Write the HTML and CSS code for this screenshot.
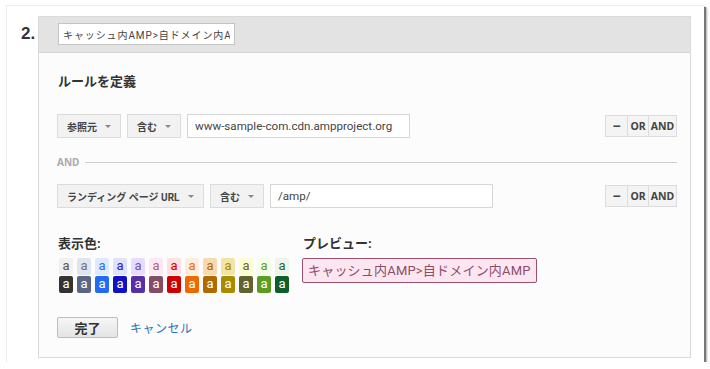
FILE: index.html
```html
<!DOCTYPE html>
<html lang="ja">
<head>
    <meta charset="UTF-8">
    <title>ルールを定義</title>
    <link rel="stylesheet" href="styles.css">
</head>
<body>
    <div class="card">
        <div class="step-num">2.</div>
        <div class="panel">
            <div class="panel-header">
                <input type="text" class="name-input" value="キャッシュ内AMP>自ドメイン内AMP">
            </div>
            <div class="panel-body">
                <h3 class="section-title">ルールを定義</h3>

                <div class="rule-row">
                    <div class="select sel-dim">参照元 <span class="caret"></span></div>
                    <div class="select sel-op">含む <span class="caret"></span></div>
                    <input type="text" class="value-input" value="www-sample-com.cdn.ampproject.org">
                    <div class="logic">
                        <button class="lbtn minus">&minus;</button><button class="lbtn or">OR</button><button class="lbtn and">AND</button>
                    </div>
                </div>

                <div class="and-sep"><span>AND</span><div class="sep-line"></div></div>

                <div class="rule-row">
                    <div class="select sel-dim2">ランディング ページ URL <span class="caret"></span></div>
                    <div class="select sel-op">含む <span class="caret"></span></div>
                    <input type="text" class="value-input" value="/amp/">
                    <div class="logic">
                        <button class="lbtn minus">&minus;</button><button class="lbtn or">OR</button><button class="lbtn and">AND</button>
                    </div>
                </div>

                <div class="color-row">
                    <div class="color-col">
                        <div class="label">表示色:</div>
                        <div class="swatches">
                            <div class="sw"><span class="lt c1l">a</span><span class="dk c1d">a</span></div>
                            <div class="sw"><span class="lt c2l">a</span><span class="dk c2d">a</span></div>
                            <div class="sw"><span class="lt c3l">a</span><span class="dk c3d">a</span></div>
                            <div class="sw"><span class="lt c4l">a</span><span class="dk c4d">a</span></div>
                            <div class="sw"><span class="lt c5l">a</span><span class="dk c5d">a</span></div>
                            <div class="sw"><span class="lt c6l">a</span><span class="dk c6d">a</span></div>
                            <div class="sw"><span class="lt c7l">a</span><span class="dk c7d">a</span></div>
                            <div class="sw"><span class="lt c8l">a</span><span class="dk c8d">a</span></div>
                            <div class="sw"><span class="lt c9l">a</span><span class="dk c9d">a</span></div>
                            <div class="sw"><span class="lt c10l">a</span><span class="dk c10d">a</span></div>
                            <div class="sw"><span class="lt c11l">a</span><span class="dk c11d">a</span></div>
                            <div class="sw"><span class="lt c12l">a</span><span class="dk c12d">a</span></div>
                            <div class="sw"><span class="lt c13l">a</span><span class="dk c13d">a</span></div>
                        </div>
                    </div>
                    <div class="preview-col">
                        <div class="label">プレビュー:</div>
                        <div class="preview">キャッシュ内AMP>自ドメイン内AMP</div>
                    </div>
                </div>

                <div class="actions">
                    <button class="done-btn">完了</button>
                    <a href="#" class="cancel">キャンセル</a>
                </div>
            </div>
        </div>
    </div>
</body>
</html>
```

FILE: styles.css
```css
body {
    margin: 0;
    background: #ffffff;
    font-family: Roboto, "Noto Sans CJK JP", sans-serif;
    color: #333;
}

.card {
    display: flex;
    margin: 5px 0 0 6px;
    width: 698px;
    height: 357px;
    box-sizing: border-box;
    padding: 10px 13px 4px 14px;
    background: #fff;
    border-top: 1px solid #ececec;
    border-left: 1px solid #ececec;
    box-shadow: 2px 2px 1px #777, 3px 3px 2px #bbb;
}

.step-num {
    width: 17px;
    flex-shrink: 0;
    font-family: "Liberation Sans", Arial, sans-serif;
    font-weight: bold;
    font-size: 17px;
    color: #333;
    padding-top: 8px;
}

.panel {
    flex: 1;
    display: flex;
    flex-direction: column;
    border: 1px solid #dadada;
    background: #fcfcfc;
}

.panel-header {
    height: 36px;
    box-sizing: border-box;
    padding: 6px 0 0 19px;
    background: #e3e3e3;
    border-bottom: 1px solid #d6d6d6;
}

.name-input {
    width: 177px;
    height: 22px;
    box-sizing: border-box;
    border: 1px solid #c4c4c4;
    background: #fff;
    padding: 0 4px;
    font-family: Roboto, "Noto Sans CJK JP", sans-serif;
    font-size: 10px;
    color: #444;
    letter-spacing: 0.9px;
    outline: none;
}

.panel-body {
    padding: 20px 13px 0 18px;
}

.section-title {
    margin: 0 0 23px 1px;
    font-size: 13px;
    font-weight: bold;
    color: #333;
    line-height: 18px;
}

.rule-row {
    display: flex;
    align-items: center;
    height: 24px;
}

.select {
    display: flex;
    align-items: center;
    justify-content: space-between;
    height: 24px;
    box-sizing: border-box;
    padding: 0 9px 0 9px;
    margin-right: 6px;
    border: 1px solid #dcdcdc;
    background: #f2f2f2;
    font-size: 10px;
    font-weight: bold;
    color: #444;
    white-space: nowrap;
}

.caret {
    width: 0;
    height: 0;
    border-left: 3px solid transparent;
    border-right: 3px solid transparent;
    border-top: 3px solid #888;
    margin-left: 8px;
}

.sel-dim { width: 64px; }
.sel-op { width: 54px; }
.sel-dim2 { width: 147px; }

.value-input {
    width: 223px;
    height: 24px;
    box-sizing: border-box;
    border: 1px solid #d6d6d6;
    background: #fff;
    padding: 0 7px;
    font-family: Roboto, sans-serif;
    font-size: 11.6px;
    color: #444;
    outline: none;
}

.logic {
    margin-left: auto;
    display: flex;
}

.lbtn {
    height: 22px;
    box-sizing: border-box;
    padding: 0;
    border: 1px solid #dcdcdc;
    margin-left: -1px;
    background: #f4f4f4;
    font-family: "Noto Sans", Roboto, sans-serif;
    font-size: 10.5px;
    font-weight: bold;
    color: #444;
}

.minus {
    width: 23px;
    font-size: 14px;
    line-height: 1;
}

.or { width: 22px; }
.and { width: 29px; }

.and-sep {
    display: flex;
    align-items: center;
    height: 22px;
    margin: 13px 0 11px;
}

.and-sep span {
    font-family: "Noto Sans", Roboto, sans-serif;
    font-size: 10px;
    font-weight: bold;
    color: #aaa;
    margin-right: 6px;
}

.sep-line {
    flex: 1;
    height: 1px;
    background: #cfcfcf;
}

.color-row {
    display: flex;
    margin-top: 27px;
}

.color-col {
    width: 245px;
}

.label {
    font-size: 13px;
    font-weight: bold;
    color: #333;
    line-height: 18px;
    margin-left: 1px;
}

.swatches {
    display: flex;
    gap: 4px;
    margin-top: 5px;
    margin-left: 2px;
}

.sw {
    display: flex;
    flex-direction: column;
    gap: 1px;
}

.sw span {
    display: block;
    width: 14px;
    height: 17px;
    border-radius: 2px;
    text-align: center;
    font-family: Roboto, sans-serif;
    font-size: 13px;
    line-height: 16px;
}

.sw .dk { color: #fff; }

.c1l { background: #f0f0f0; color: #555; }
.c2l { background: #dfe4ee; color: #6b7690; }
.c3l { background: #dfe9ff; color: #2c6cf0; }
.c4l { background: #e0e0ff; color: #2323c6; }
.c5l { background: #e6dcff; color: #7452c0; }
.c6l { background: #ffe8f2; color: #a06780; }
.c7l { background: #ffdfdf; color: #cc0000; }
.c8l { background: #ffecdc; color: #ea6a10; }
.c9l { background: #fbd9ae; color: #b06a10; }
.c10l { background: #f2e4a6; color: #a88c00; }
.c11l { background: #fdfdd2; color: #666633; }
.c12l { background: #f4fde6; color: #5f9e28; }
.c13l { background: #eff4ea; color: #1b6b3a; }

.c1d { background: #333333; }
.c2d { background: #5b6684; }
.c3d { background: #206df2; }
.c4d { background: #1111c4; }
.c5d { background: #572fa4; }
.c6d { background: #854c64; }
.c7d { background: #cc0000; }
.c8d { background: #ec6a00; }
.c9d { background: #b06a00; }
.c10d { background: #a88c00; }
.c11d { background: #616132; }
.c12d { background: #5d9c22; }
.c13d { background: #0e5e2c; }

.preview {
    margin-top: 5px;
    height: 25px;
    width: 235px;
    box-sizing: border-box;
    border: 1px solid #9c5070;
    border-radius: 2px;
    background: #fde6f0;
    color: #8a4d68;
    font-size: 13px;
    line-height: 23px;
    padding-left: 5px;
    letter-spacing: 0.2px;
    white-space: nowrap;
}

.actions {
    display: flex;
    align-items: center;
    margin-top: 24px;
}

.done-btn {
    width: 61px;
    height: 21px;
    box-sizing: border-box;
    border: 1px solid #bdbdbd;
    border-radius: 2px;
    background: linear-gradient(#f6f6f6, #e4e4e4);
    font-family: Roboto, "Noto Sans CJK JP", sans-serif;
    font-size: 13px;
    font-weight: bold;
    color: #333;
    padding: 0;
}

.cancel {
    margin-left: 12px;
    font-size: 12px;
    color: #2a74b8;
    text-decoration: none;
    letter-spacing: 0.5px;
}
```
